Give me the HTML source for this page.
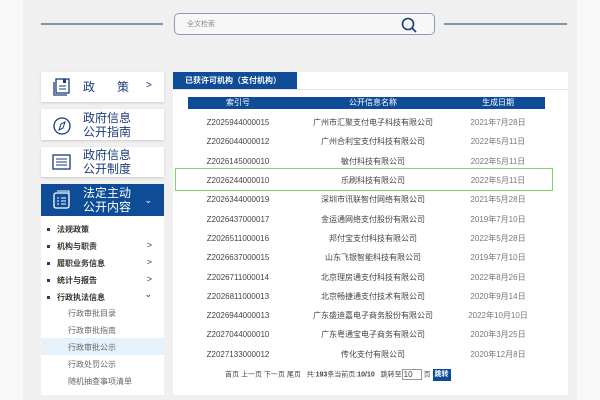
<!DOCTYPE html>
<html><head><meta charset="utf-8"><style>
*{margin:0;padding:0;box-sizing:border-box}
body{width:600px;height:400px;overflow:hidden;background:#f8f8f8;font-family:"Liberation Sans","Noto Sans CJK SC",sans-serif;position:relative}
.main{position:absolute;left:23px;top:0;width:554px;height:400px;background:#f0f0f0}
.abs{position:absolute}
.line{position:absolute;height:2px;background:#8294ad;top:23px}
.search{left:174px;top:13px;width:261px;height:22px;border:1px solid #8a9bb5;border-radius:5px;background:#f7f7f7}
.nav{left:41px;width:123px;background:#fff;box-shadow:0 1px 2px #ccc}
.nav .t{position:absolute;left:42px;font-size:12px;color:#1a3b7a;line-height:14px}
.sub{position:absolute;left:41px;top:216px;width:123px;height:179px;background:#fff}
.sub div{position:absolute;font-size:8px;color:#333;white-space:nowrap}
.sub .b{left:16px;font-weight:bold;color:#333}
.sub .b:before{content:"";position:absolute;left:-10px;top:4px;width:3px;height:3px;background:#1a3b7a}
.sub .s{left:27px;color:#666}
.arr{position:absolute;right:12px;font-size:9px;color:#1a3b7a}
.panel{left:173px;top:72px;width:395px;height:323px;background:#fff}
.tab{position:absolute;left:0;top:0;width:124px;height:17px;background:#0f4c97;color:#fff;font-size:8px;font-weight:bold;line-height:17px;padding-left:12px}
.tabline{position:absolute;left:0;top:17px;width:395px;height:1px;background:#e2e2e2}
.hd{position:absolute;left:15px;top:25px;width:357px;height:12px;background:#0f4c97;color:#fff;font-size:8px;line-height:12px}
.row{position:absolute;left:0;width:395px;height:12px;font-size:8px;color:#444;line-height:12px}
.c1,.c2,.c3{position:absolute;text-align:center;white-space:nowrap}
.c1{left:15px;width:100px}.c2{left:130px;width:140px}.c3{left:275px;width:100px;color:#777}
.hd .c1{left:0}.hd .c2{left:115px}.hd .c3{left:260px;color:#fff}
</style></head><body>
<div class="main"></div>
<div class="line" style="left:41px;width:122px"></div>
<div class="line" style="left:444px;width:123px"></div>
<div class="abs search"><span style="position:absolute;left:12px;top:5px;font-size:7px;color:#888">全文检索</span>
<svg style="position:absolute;left:225px;top:2px" width="18" height="18" viewBox="0 0 18 18"><circle cx="8" cy="8" r="5.5" fill="none" stroke="#1a3b7a" stroke-width="1.6"/><path d="M12 12l4 4" stroke="#1a3b7a" stroke-width="1.6"/></svg></div>

<div class="abs nav" style="top:72px;height:30px">
<svg class="abs" style="left:11px;top:6px" width="20" height="18" viewBox="0 0 20 18"><rect x="4" y="1" width="13" height="14" fill="none" stroke="#1a3b7a" stroke-width="1.3"/><path d="M2 4v13h13" fill="none" stroke="#1a3b7a" stroke-width="1.3"/><path d="M7 8h7M7 11h7" stroke="#1a3b7a"/><rect x="11" y="1" width="3" height="4" fill="#1a3b7a"/></svg>
<div class="t" style="top:8px;letter-spacing:22px">政策</div><span class="arr" style="top:8px;font-size:10px">&gt;</span></div>
<div class="abs nav" style="top:109px;height:31px">
<svg class="abs" style="left:11px;top:7px" width="20" height="20" viewBox="0 0 20 20"><circle cx="10" cy="10" r="8" fill="none" stroke="#1a3b7a" stroke-width="1.3"/><path d="M13 6l-2 6-4 2 2-6z" fill="none" stroke="#1a3b7a"/></svg>
<div class="t" style="top:2px">政府信息<br>公开指南</div></div>
<div class="abs nav" style="top:147px;height:30px">
<svg class="abs" style="left:11px;top:6px" width="20" height="18" viewBox="0 0 20 18"><rect x="1" y="2" width="17" height="14" fill="none" stroke="#1a3b7a" stroke-width="1.3"/><path d="M4 6h11M4 9h11M4 12h11" stroke="#1a3b7a"/></svg>
<div class="t" style="top:1px">政府信息<br>公开制度</div></div>
<div class="abs" style="left:41px;top:184px;width:123px;height:32px;background:#0f4c97">
<svg class="abs" style="left:11px;top:6px" width="20" height="20" viewBox="0 0 20 20"><rect x="2" y="3" width="15" height="15" rx="2" fill="none" stroke="#fff" stroke-width="1.3"/><path d="M5 1h12v13" fill="none" stroke="#fff"/><path d="M5 8h2M9 8h5M5 11h2M9 11h5M5 14h2M9 14h5" stroke="#fff"/></svg>
<div style="position:absolute;left:42px;top:2px;font-size:12px;line-height:14px;color:#fff">法定主动<br>公开内容</div><span class="arr" style="top:11px;color:#fff">⌄</span></div>
<div class="sub">
<div class="b" style="top:8px">法规政策</div>
<div class="b" style="top:25px">机构与职责</div><span class="arr" style="top:24px">&gt;</span>
<div class="b" style="top:42px">履职业务信息</div><span class="arr" style="top:41px">&gt;</span>
<div class="b" style="top:59px">统计与报告</div><span class="arr" style="top:58px">&gt;</span>
<div class="b" style="top:76px">行政执法信息</div><span class="arr" style="top:73px">⌄</span>
<div class="s" style="top:92px">行政审批目录</div>
<div class="s" style="top:109px">行政审批指南</div>
<div style="left:0;top:122px;width:123px;height:17px;background:#e5f1fb"></div>
<div class="s" style="top:126px">行政审批公示</div>
<div class="s" style="top:143px">行政处罚公示</div>
<div class="s" style="top:160px">随机抽查事项清单</div>
</div>

<div class="abs panel">
<div class="tab">已获许可机构（支付机构）</div><div class="tabline"></div>
<div class="hd"><span class="c1">索引号</span><span class="c2">公开信息名称</span><span class="c3">生成日期</span></div>
<div class="row" style="top:45px"><span class="c1">Z2025944000015</span><span class="c2">广州市汇聚支付电子科技有限公司</span><span class="c3">2021年7月28日</span></div>
<div class="row" style="top:64px"><span class="c1">Z2026044000012</span><span class="c2">广州合利宝支付科技有限公司</span><span class="c3">2022年5月11日</span></div>
<div class="row" style="top:84px"><span class="c1">Z2026145000010</span><span class="c2">敏付科技有限公司</span><span class="c3">2022年5月11日</span></div>
<div class="row" style="top:103px"><span class="c1">Z2026244000010</span><span class="c2">乐刷科技有限公司</span><span class="c3">2022年5月11日</span></div>
<div class="row" style="top:122px"><span class="c1">Z2026344000019</span><span class="c2">深圳市讯联智付网络有限公司</span><span class="c3">2021年5月28日</span></div>
<div class="row" style="top:142px"><span class="c1">Z2026437000017</span><span class="c2">金运通网络支付股份有限公司</span><span class="c3">2019年7月10日</span></div>
<div class="row" style="top:161px"><span class="c1">Z2026511000016</span><span class="c2">邦付宝支付科技有限公司</span><span class="c3">2022年5月28日</span></div>
<div class="row" style="top:180px"><span class="c1">Z2026637000015</span><span class="c2">山东飞银智能科技有限公司</span><span class="c3">2019年7月10日</span></div>
<div class="row" style="top:200px"><span class="c1">Z2026711000014</span><span class="c2">北京理房通支付科技有限公司</span><span class="c3">2022年8月26日</span></div>
<div class="row" style="top:219px"><span class="c1">Z2026811000013</span><span class="c2">北京畅捷通支付技术有限公司</span><span class="c3">2020年9月14日</span></div>
<div class="row" style="top:238px"><span class="c1">Z2026944000013</span><span class="c2">广东盛迪嘉电子商务股份有限公司</span><span class="c3">2022年10月10日</span></div>
<div class="row" style="top:257px"><span class="c1">Z2027044000010</span><span class="c2">广东粤通宝电子商务有限公司</span><span class="c3">2020年3月25日</span></div>
<div class="row" style="top:277px"><span class="c1">Z2027133000012</span><span class="c2">传化支付有限公司</span><span class="c3">2020年12月8日</span></div>
<div style="position:absolute;left:52px;top:297px;font-size:7px;color:#444;white-space:nowrap;line-height:12px">首页 上一页 下一页 尾页 &nbsp; 共:<b>193</b>条当前页:<b>10/10</b> &nbsp; 跳转至<span style="display:inline-block;width:20px;height:11px;border:1px solid #999;vertical-align:middle;font-size:8px;line-height:9px;padding-left:1px">10</span> 页 <span style="display:inline-block;background:#0f4c97;color:#fff;padding:0 2px;font-weight:bold">跳转</span></div>
</div>
<div class="abs" style="left:175px;top:168px;width:378px;height:23px;border:1.5px solid #7ed36b"></div>
</body></html>
